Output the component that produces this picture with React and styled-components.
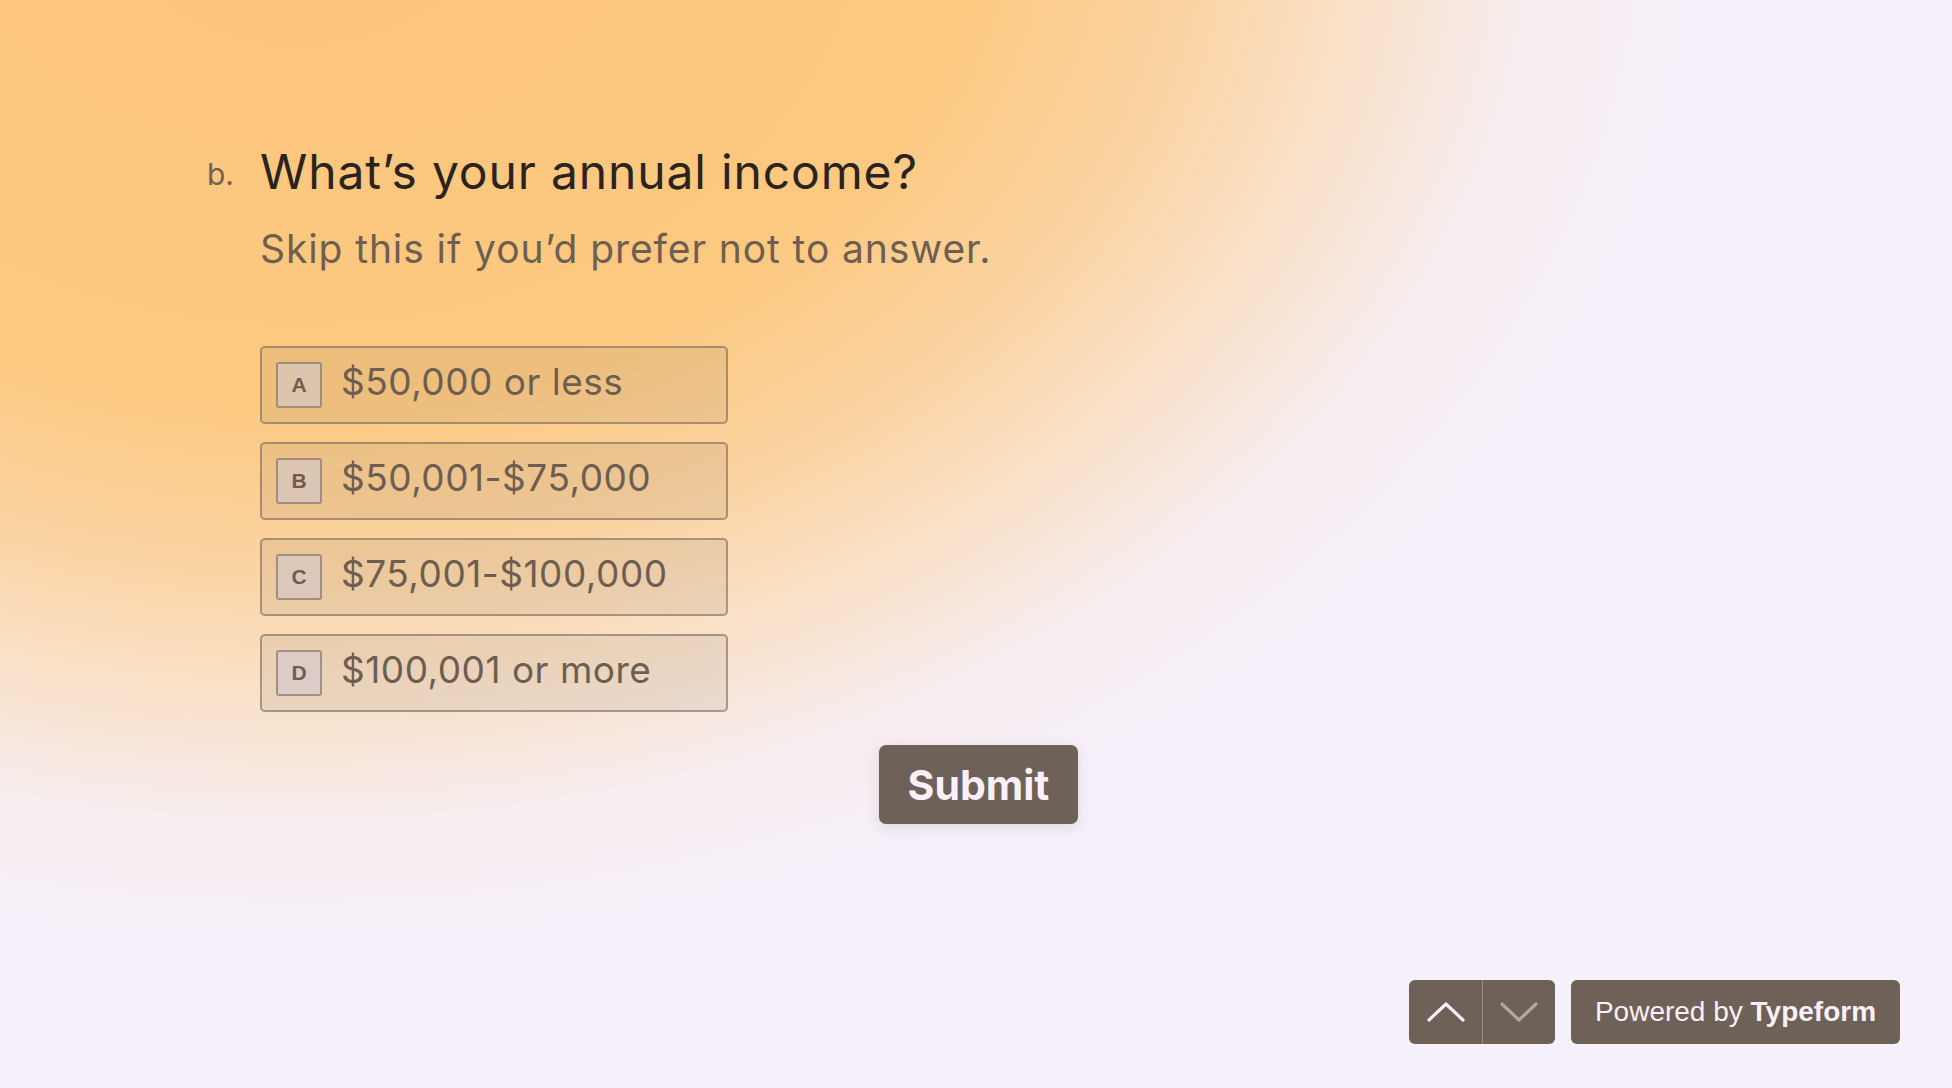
import React from 'react'
import styled, { createGlobalStyle } from 'styled-components'

const GlobalStyle = createGlobalStyle`
  html, body {
    margin: 0;
    padding: 0;
  }
  body {
    font-family: Inter, "Noto Sans", sans-serif;
  }
`

const brown = '#6e6157'

const Page = styled.div`
  min-height: 100vh;
  display: flex;
  flex-direction: column;
  background-color: #f6f0fb;
  background-image: radial-gradient(
    ellipse 1500px 1120px at 300px -100px,
    #fcc47a 0%,
    #fcc981 45%,
    #fbd4a4 60%,
    #f9e2cc 72%,
    #f7ecee 82%,
    #f6f0fb 95%
  );
`

const Main = styled.main`
  flex: 1;
  padding: 142px 0 0 207px;
`

const QuestionRow = styled.div`
  display: flex;
  align-items: baseline;
`

const Num = styled.span`
  width: 53px;
  flex: none;
  font-size: 30px;
  color: ${brown};
  position: relative;
  top: -4px;
`

const Body = styled.div`
  display: flex;
  flex-direction: column;
`

const Title = styled.h1`
  margin: 0;
  font-size: 48px;
  line-height: 60px;
  font-weight: 400;
  letter-spacing: 0.85px;
  color: #2b241e;
`

const Desc = styled.p`
  margin: 22px 0 0;
  font-size: 39px;
  line-height: 50px;
  font-weight: 400;
  letter-spacing: 0.9px;
  color: #6e5f51;
`

const Choices = styled.div`
  margin-top: 72px;
  display: flex;
  flex-direction: column;
  gap: 18px;
`

const Choice = styled.div`
  box-sizing: border-box;
  width: 468px;
  height: 78px;
  display: flex;
  align-items: center;
  padding: 0 16px;
  gap: 19px;
  border: 2px solid rgba(110, 97, 87, 0.55);
  border-radius: 5px;
  background: rgba(110, 97, 87, 0.1);
  color: #6d5e51;
`

const Key = styled.span`
  box-sizing: border-box;
  width: 46px;
  height: 46px;
  margin-left: -2px;
  flex: none;
  display: flex;
  align-items: center;
  justify-content: center;
  border: 2px solid rgba(110, 97, 87, 0.55);
  border-radius: 3px;
  background: rgba(210, 200, 205, 0.6);
  font-family: "Liberation Sans", Arial, sans-serif;
  font-weight: 700;
  font-size: 21px;
  color: #6d5e51;
`

const ChoiceText = styled.span`
  margin-top: -7px;
  font-size: 37px;
  letter-spacing: 0.5px;
  white-space: nowrap;
`

const SubmitRow = styled.div`
  margin-top: 33px;
  padding-left: 619px;
`

const SubmitButton = styled.button`
  width: 199px;
  height: 79px;
  border: none;
  border-radius: 7px;
  background: ${brown};
  color: #fbf0fb;
  font-family: Inter, sans-serif;
  font-weight: 700;
  font-size: 41px;
  box-shadow: 0 4px 14px rgba(80, 60, 50, 0.12);
  cursor: pointer;
`

const Footer = styled.footer`
  display: flex;
  justify-content: flex-end;
  gap: 16px;
  padding: 0 52px 44px 0;
`

const NavGroup = styled.div`
  display: flex;
  height: 64px;
  border-radius: 6px;
  overflow: hidden;
  background: ${brown};
`

const NavBtn = styled.button`
  width: 73px;
  height: 64px;
  border: none;
  background: transparent;
  display: flex;
  align-items: center;
  justify-content: center;
  padding: 0;
  color: ${p => (p.$dim ? '#b3a79e' : '#fbf0fb')};
  & + & {
    border-left: 1.5px solid #9a8c82;
  }
`

const Brand = styled.a`
  box-sizing: border-box;
  height: 64px;
  width: 329px;
  display: flex;
  align-items: center;
  justify-content: center;
  border-radius: 6px;
  background: ${brown};
  color: #fbf0fb;
  font-family: "Liberation Sans", Arial, sans-serif;
  font-size: 28px;
  text-decoration: none;
  white-space: pre;
  b {
    font-weight: 700;
  }
`

function Chevron({ up }) {
  return (
    <svg width="40" height="22" viewBox="0 0 40 22" fill="none">
      <path
        d={up ? 'M3 19 L20 3 L37 19' : 'M3 3 L20 19 L37 3'}
        stroke="currentColor"
        strokeWidth="3.2"
        strokeLinecap="round"
        strokeLinejoin="round"
      />
    </svg>
  )
}

const options = [
  { key: 'A', label: '$50,000 or less' },
  { key: 'B', label: '$50,001-$75,000' },
  { key: 'C', label: '$75,001-$100,000' },
  { key: 'D', label: '$100,001 or more' },
]

export default function App() {
  return (
    <Page>
      <GlobalStyle />
      <Main>
        <QuestionRow>
          <Num>b.</Num>
          <Body>
            <Title>What’s your annual income?</Title>
            <Desc>Skip this if you’d prefer not to answer.</Desc>
            <Choices>
              {options.map(o => (
                <Choice key={o.key}>
                  <Key>{o.key}</Key>
                  <ChoiceText>{o.label}</ChoiceText>
                </Choice>
              ))}
            </Choices>
            <SubmitRow>
              <SubmitButton>Submit</SubmitButton>
            </SubmitRow>
          </Body>
        </QuestionRow>
      </Main>
      <Footer>
        <NavGroup>
          <NavBtn aria-label="Previous">
            <Chevron up />
          </NavBtn>
          <NavBtn $dim aria-label="Next">
            <Chevron />
          </NavBtn>
        </NavGroup>
        <Brand href="#">
          Powered by <b>Typeform</b>
        </Brand>
      </Footer>
    </Page>
  )
}
